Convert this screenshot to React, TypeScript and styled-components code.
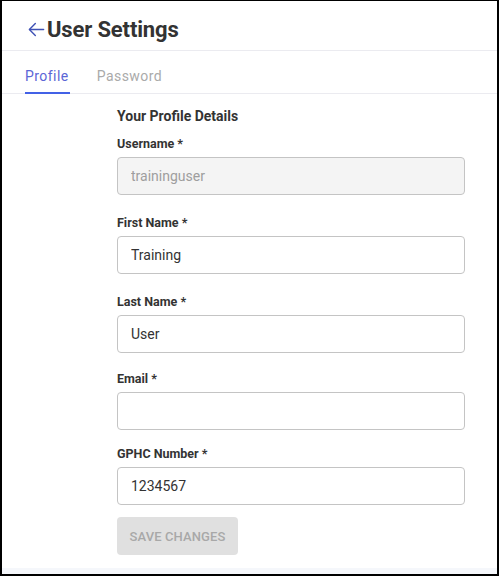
import React from "react";
import styled, { createGlobalStyle } from "styled-components";

const Global = createGlobalStyle`
  html, body { margin: 0; padding: 0; }
  body { font-family: Roboto, "Noto Sans", Arial, sans-serif; background: #ffffff; }
  * { box-sizing: border-box; }
`;

const Frame = styled.div`
  width: 499px;
  height: 576px;
  border-style: solid;
  border-color: #000;
  border-width: 1px 2px 2px 2px;
  background: #f5f7fb;
  display: flex;
  flex-direction: column;
  overflow: hidden;
`;

const Card = styled.div`
  background: #fff;
  height: 567px;
  display: flex;
  flex-direction: column;
`;

const Header = styled.header`
  height: 50px;
  border-bottom: 1px solid #ebebf0;
  display: flex;
  align-items: center;
  padding: 8px 0 0 25px;
  gap: 1px;
`;

const BackButton = styled.button`
  border: 0;
  background: none;
  padding: 0;
  width: 19px;
  height: 24px;
  display: flex;
  align-items: center;
  justify-content: center;
  color: #3f51b5;
  cursor: pointer;
`;

const Title = styled.h1`
  margin: 0;
  font-size: 22px;
  font-weight: 700;
  color: #333333;
  letter-spacing: -0.15px;
`;

const Tabs = styled.nav`
  height: 43px;
  border-bottom: 1px solid #ebebf0;
  display: flex;
  align-items: stretch;
  gap: 27px;
  padding-left: 23px;
`;

const Tab = styled.div<{ $active?: boolean }>`
  display: flex;
  align-items: center;
  padding: 8px 1px 0 0;
  font-size: 14px;
  letter-spacing: 0.45px;
  color: ${(p) => (p.$active ? "#5b66d6" : "#aaaaaa")};
  border-bottom: 2px solid ${(p) => (p.$active ? "#4361e6" : "transparent")};
  margin-bottom: -1px;
`;

const Content = styled.main`
  padding: 14px 0 0 115px;
`;

const Form = styled.form`
  width: 348px;
  display: flex;
  flex-direction: column;
`;

const SectionTitle = styled.h2`
  margin: 0 0 12px 0;
  font-size: 14px;
  line-height: 16px;
  font-weight: 700;
  color: #333333;
`;

const Field = styled.div<{ $space: number }>`
  display: flex;
  flex-direction: column;
  gap: 5px;
  margin-bottom: ${(p) => p.$space}px;
`;

const Label = styled.label`
  font-size: 12.5px;
  line-height: 16px;
  font-weight: 700;
  color: #333333;
`;

const Input = styled.input`
  height: 38px;
  width: 100%;
  border: 1px solid #c4c4c4;
  border-radius: 4px;
  padding: 0 13px;
  font-family: Roboto, "Noto Sans", Arial, sans-serif;
  font-size: 14px;
  color: #333333;
  background: #fff;
  outline: none;
  &:disabled {
    background: #f4f4f4;
    color: #9e9e9e;
  }
`;

const SaveButton = styled.button`
  align-self: flex-start;
  width: 121px;
  height: 38px;
  border: 0;
  border-radius: 4px;
  background: #e0e0e0;
  color: #a8a8a8;
  font-family: Roboto, "Noto Sans", Arial, sans-serif;
  font-size: 13px;
  font-weight: 500;
  text-transform: uppercase;
  letter-spacing: 0.1px;
`;

const fields = [
  { label: "Username *", value: "traininguser", disabled: true, space: 20 },
  { label: "First Name *", value: "Training", space: 20 },
  { label: "Last Name *", value: "User", space: 18 },
  { label: "Email *", value: "", space: 16 },
  { label: "GPHC Number *", value: "1234567", space: 12 },
];

export default function App() {
  return (
    <>
      <Global />
      <Frame>
        <Card>
          <Header>
            <BackButton aria-label="Back">
              <svg width="19" height="19" viewBox="0 0 24 24" fill="none" stroke="currentColor" strokeWidth="1.8" strokeLinecap="round" strokeLinejoin="round">
                <path d="M21 12H3.5" />
                <path d="M10.5 4.5L3 12l7.5 7.5" />
              </svg>
            </BackButton>
            <Title>User Settings</Title>
          </Header>
          <Tabs>
            <Tab $active>Profile</Tab>
            <Tab>Password</Tab>
          </Tabs>
          <Content>
            <Form onSubmit={(e) => e.preventDefault()}>
              <SectionTitle>Your Profile Details</SectionTitle>
              {fields.map((f) => (
                <Field key={f.label} $space={f.space}>
                  <Label>{f.label}</Label>
                  <Input defaultValue={f.value} disabled={f.disabled} />
                </Field>
              ))}
              <SaveButton type="submit" disabled>Save Changes</SaveButton>
            </Form>
          </Content>
        </Card>
      </Frame>
    </>
  );
}
